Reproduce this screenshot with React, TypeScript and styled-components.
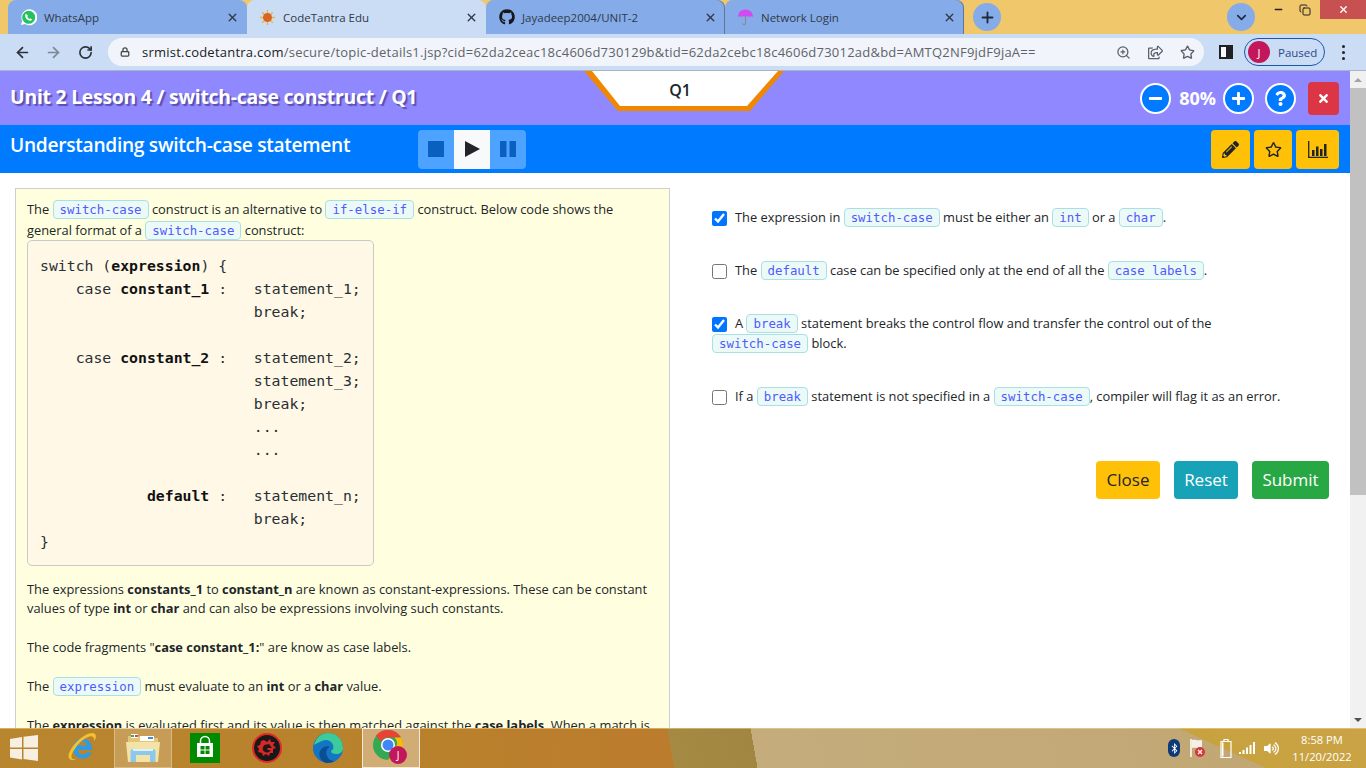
import styled, { createGlobalStyle } from 'styled-components';
import { ArrowLeft, ArrowRight, RotateCw, Lock, ZoomIn, Star, ChevronDown, Plus, X, Minus, Copy } from 'lucide-react';
import { FaGithub, FaRegShareSquare, FaPencilAlt, FaRegStar, FaTimes, FaPlus, FaMinus, FaQuestion, FaBluetoothB, FaVolumeUp } from 'react-icons/fa';

const GlobalStyle = createGlobalStyle`
  html, body { margin: 0; padding: 0; height: 100%; overflow: hidden; }
  body { font-family: "Open Sans", "Liberation Sans", sans-serif; color: #212529; }
  #root { height: 100%; }
  * { box-sizing: border-box; }
`;

const Screen = styled.div`
  display: flex;
  flex-direction: column;
  width: 1366px;
  height: 768px;
  overflow: hidden;
`;

/* browser chrome */
const TabStrip = styled.div`
  display: flex;
  align-items: flex-start;
  height: 34px;
  padding-left: 8px;
  background: #f0c76b;
`;

const Tab = styled.div<{ $active?: boolean; $sep?: boolean }>`
  display: flex;
  align-items: center;
  flex: none;
  width: 239px;
  height: 34px;
  padding: 0 8px 0 12px;
  border-radius: 8px 8px 0 0;
  background: ${p => (p.$active ? '#cbdcf5' : '#85ace8')};
  ${p => p.$sep && 'box-shadow: inset -1px 0 0 #5f7696;'}
  font-size: 11.5px;
  color: #2f3a4a;
  white-space: nowrap;
`;

const TabIcon = styled.span`
  display: flex;
  align-items: center;
  justify-content: center;
  width: 17px;
  height: 17px;
  margin-right: 7px;
  flex: none;
`;

const TabTitle = styled.span`
  flex: 1;
`;

const RoundButton = styled.div<{ $ml: number }>`
  display: flex;
  align-items: center;
  justify-content: center;
  flex: none;
  width: 28px;
  height: 28px;
  margin: 3px 0 0 ${p => p.$ml}px;
  border-radius: 50%;
  background: #85ace8;
  color: #1f2a3a;
`;

const WindowControls = styled.div`
  display: flex;
  align-items: flex-start;
  flex: none;
  margin-left: 12px;
`;

const WinButton = styled.div<{ $close?: boolean; $w: number }>`
  display: flex;
  align-items: center;
  justify-content: center;
  width: ${p => p.$w}px;
  height: 19px;
  background: ${p => (p.$close ? '#c75050' : 'transparent')};
  color: ${p => (p.$close ? '#fff' : '#222')};
`;

const Toolbar = styled.div`
  display: flex;
  align-items: center;
  height: 37px;
  padding-left: 6px;
  background: #cbdcf5;
  border-bottom: 1px solid #a9b3c9;
`;

const NavButton = styled.div<{ $w: number; $dim?: boolean }>`
  display: flex;
  align-items: center;
  justify-content: center;
  width: ${p => p.$w}px;
  color: ${p => (p.$dim ? '#7d8794' : '#2b2f36')};
`;

const AddressBar = styled.div`
  display: flex;
  align-items: center;
  flex: none;
  width: 1096px;
  height: 28px;
  margin-left: 6px;
  padding: 0 1px 0 12px;
  border-radius: 14px;
  background: #f1f5fb;
  font-size: 13px;
  letter-spacing: 0.23px;
  color: #5f6368;
`;

const Url = styled.span`
  flex: 1;
  margin-left: 12px;
  white-space: nowrap;
  b { font-weight: 400; color: #202124; }
`;

const AddressAction = styled.span`
  display: flex;
  justify-content: center;
  width: 32px;
  color: #5a6068;
`;

const SidePanelIcon = styled.div`
  flex: none;
  width: 14px;
  height: 14px;
  margin: 0 11px 0 15px;
  border: 2px solid #202124;
  border-right-width: 7px;
  background: #f7f9fc;
`;

const ProfilePill = styled.div`
  display: flex;
  align-items: center;
  flex: none;
  width: 81px;
  height: 28px;
  padding-left: 3px;
  border: 1px solid #1a56b0;
  border-radius: 14px;
  font-size: 11.5px;
  color: #2a4a8a;
`;

const Avatar = styled.span`
  display: flex;
  align-items: center;
  justify-content: center;
  width: 22px;
  height: 22px;
  margin-right: 8px;
  border-radius: 50%;
  background: #c2185b;
  color: #fff;
  font-size: 11px;
`;

const MenuDots = styled.div`
  display: flex;
  flex-direction: column;
  gap: 3px;
  margin-left: 17px;
  span { width: 3px; height: 3px; border-radius: 50%; background: #222; }
`;

/* page */
const Page = styled.div`
  display: flex;
  flex: 1;
  min-height: 0;
`;

const Scrollbar = styled.div`
  display: flex;
  flex-direction: column;
  width: 16px;
  background: #f1f1f1;
`;

const ScrollArrow = styled.div<{ $down?: boolean }>`
  height: 17px;
  flex: none;
  display: flex;
  align-items: center;
  justify-content: center;
  margin-top: ${p => (p.$down ? 'auto' : '0')};
  &::after {
    content: '';
    border-left: 4px solid transparent;
    border-right: 4px solid transparent;
    ${p => (p.$down ? 'border-top: 4px solid #505050;' : 'border-bottom: 4px solid #a3a3a3;')}
  }
`;

const ScrollThumb = styled.div`
  height: 407px;
  background: #c1c1c1;
`;

const Main = styled.div`
  display: flex;
  flex-direction: column;
  flex: 1;
  min-width: 0;
  background: #fff;
`;

const LessonBar = styled.div`
  position: relative;
  display: flex;
  align-items: center;
  height: 54px;
  padding: 0 11px 0 10px;
  background: #9088ff;
`;

const LessonTitle = styled.div`
  flex: 1;
  margin-top: -4px;
  font-size: 19.4px;
  font-weight: 700;
  letter-spacing: -0.25px;
  color: #fff;
  text-shadow: 2px 2px 1px #5a4fb0;
`;

const QuestionTab = styled.div`
  position: absolute;
  left: 584px;
  top: 0;
  width: 200px;
  height: 40px;
  background: #f08700;
  clip-path: polygon(0 0, 100% 0, 166px 100%, 34px 100%);
`;

const QuestionInner = styled.div`
  width: 186px;
  height: 35px;
  margin-left: 8px;
  padding-top: 8px;
  padding-right: 10px;
  background: #fff;
  clip-path: polygon(0 0, 100% 0, 155px 100%, 28px 100%);
  text-align: center;
  font-size: 16px;
  font-weight: 600;
  line-height: 22px;
`;

const ZoomCircle = styled.div<{ $ml: number }>`
  display: flex;
  align-items: center;
  justify-content: center;
  width: 31px;
  height: 31px;
  margin-left: ${p => p.$ml}px;
  border: 2px solid #fff;
  border-radius: 50%;
  background: #007bff;
  color: #fff;
  font-size: 15px;
`;

const ZoomValue = styled.span`
  margin-left: 8px;
  font-size: 18px;
  font-weight: 700;
  letter-spacing: 0;
  color: #fff;
`;

const CloseSquare = styled.div`
  display: flex;
  align-items: center;
  justify-content: center;
  width: 31px;
  height: 33px;
  margin-left: 12px;
  border-radius: 4px;
  background: #dc3545;
  color: #fff;
  font-size: 13px;
`;

const TopicBar = styled.div`
  display: flex;
  align-items: center;
  height: 48px;
  padding: 0 11px 0 10px;
  background: #007bff;
`;

const TopicTitle = styled.div`
  width: 408px;
  margin-top: -10px;
  font-size: 19.2px;
  font-weight: 600;
  letter-spacing: -0.3px;
  color: #fff;
`;

const PlayGroup = styled.div`
  display: flex;
  height: 39px;
  border-radius: 4px;
  overflow: hidden;
  background: #4da3ff;
`;

const PlayButton = styled.div<{ $active?: boolean }>`
  display: flex;
  align-items: center;
  justify-content: center;
  width: 36px;
  background: ${p => (p.$active ? '#f8f9fa' : 'transparent')};
  color: ${p => (p.$active ? '#212529' : '#0a60bf')};
`;

const ActionGroup = styled.div`
  display: flex;
  gap: 4px;
  margin-left: auto;
`;

const ActionButton = styled.div<{ $w: number }>`
  display: flex;
  align-items: center;
  justify-content: center;
  width: ${p => p.$w}px;
  height: 39px;
  border-radius: 4px;
  background: #ffc107;
  color: #212529;
  font-size: 17px;
`;

const Content = styled.div`
  display: flex;
  flex: 1;
  min-height: 0;
  overflow: hidden;
`;

const LessonPanel = styled.div`
  flex: none;
  width: 655px;
  height: 620px;
  margin: 15px 0 0 15px;
  padding: 10px 11px;
  border: 1px solid #cfcfcf;
  background: #ffffe0;
  font-size: 12.85px;
  line-height: 19.4px;
`;

const LessonText = styled.p`
  margin: 0 0 19.5px;
`;

const IntroText = styled.p`
  margin: 0 0 -1px;
  line-height: 21px;
`;

const Pill = styled.code`
  display: inline-block;
  padding: 0 6px;
  border: 1px solid #a9e0e8;
  border-radius: 4px;
  background: #ebfaf7;
  font-family: "DejaVu Sans Mono", monospace;
  font-size: 12.4px;
  line-height: 17px;
  color: #4f5bff;
`;

const CodeBlock = styled.pre`
  width: 347px;
  height: 326px;
  margin: 0 0 14px;
  padding: 13px 12px;
  border: 1px solid #c9c9c9;
  border-radius: 5px;
  background: #fff8e7;
  font-family: "DejaVu Sans Mono", monospace;
  font-size: 14.8px;
  line-height: 23px;
  color: #2a2f33;
  b { font-weight: 700; color: #111; }
`;

const Quiz = styled.div`
  flex: 1;
  margin-left: 42px;
  padding: 34px 21px 0 0;
  font-size: 12.85px;
  line-height: 20px;
`;

const QuizRow = styled.div`
  max-width: 590px;
  margin-bottom: 33px;
`;

const Check = styled.input`
  width: 15px;
  height: 15px;
  margin: 0 8px 0 0;
  vertical-align: -4px;
`;

const QuizActions = styled.div`
  display: flex;
  justify-content: flex-end;
  gap: 14px;
  margin-top: 55px;
`;

const QuizButton = styled.div<{ $bg: string; $fg: string; $w: number }>`
  display: flex;
  align-items: center;
  justify-content: center;
  width: ${p => p.$w}px;
  height: 38px;
  border-radius: 4px;
  background: ${p => p.$bg};
  color: ${p => p.$fg};
  font-size: 17px;
`;

/* windows taskbar */
const Taskbar = styled.div`
  display: flex;
  align-items: center;
  height: 40px;
  background:
    linear-gradient(24.4deg, transparent 523px, #c8a23f 523px, #caa347 601px),
    linear-gradient(80deg, #b8862f 0, #b9812b 400px, #bb7c2d 664px, #a58a44 664px, #a08640 746px, #c5ac7c 746px, #c0a672 1352px);
  box-shadow: inset 0 1px 0 rgba(255, 225, 160, 0.45);
`;

const TaskSlot = styled.div<{ $w: number; $ml: number; $open?: 'on' | 'active' }>`
  display: flex;
  align-items: center;
  justify-content: center;
  flex: none;
  width: ${p => p.$w}px;
  height: 40px;
  margin-left: ${p => p.$ml}px;
  ${p => p.$open === 'on' && 'background: rgba(255,255,255,.2); border: 1px solid rgba(255,255,255,.3);'}
  ${p => p.$open === 'active' && 'background: rgba(255,255,255,.35); border: 1px solid rgba(255,255,255,.75);'}
`;

const Tray = styled.div`
  display: flex;
  align-items: center;
  margin-left: auto;
  color: #fff;
`;

const TrayIcon = styled.span<{ $w: number }>`
  display: flex;
  justify-content: center;
  width: ${p => p.$w}px;
`;

const Clock = styled.div`
  width: 64px;
  margin: 0 12px 0 4px;
  text-align: center;
  font-size: 11.2px;
  line-height: 17px;
  color: #fff;
`;

const Bluetooth = styled.span`
  display: flex;
  align-items: center;
  justify-content: center;
  flex: none;
  width: 12px;
  height: 18px;
  border-radius: 6px;
  background: #0f3a78;
  color: #fff;
  font-size: 11px;
`;

const Whats = () => (
  <svg width="17" height="17" viewBox="0 0 17 17">
    <path d="M1 16l1.200-4.200A8 8 0 1 1 5 15z" fill="#fff" />
    <circle cx="8.700" cy="8.300" r="6.500" fill="#25c15f" />
    <path d="M6 4.800c-.7.600-1.100 1.500-.8 2.600.6 2 2.200 3.600 4.300 4.300 1.100.3 2-.2 2.600-1l-1.700-1.500-1 .7c-1-.4-1.700-1.100-2.100-2.100l.7-1z" fill="#fff" />
  </svg>
);

const Sun = () => (
  <svg width="17" height="17" viewBox="0 0 17 17">
    <g stroke="#e9b24b" strokeWidth="1.300">
      <path d="M8.500 1v15M1 8.500h15M3.200 3.200l10.600 10.600M13.800 3.200L3.200 13.800" />
    </g>
    <circle cx="8.500" cy="8.500" r="4.500" fill="#d9661f" />
  </svg>
);

const Umbrella = () => (
  <svg width="18" height="18" viewBox="0 0 18 18">
    <path d="M1 9c0-5 3.500-8 8-8s8 3 8 8c-1-1-2.500-1-3.500 0-1-1-3.500-1-4.500 0-1-1-3.500-1-4.500 0C3.500 8 2 8 1 9z" fill="#d14cf0" />
    <path d="M9 8v7.500a1.500 1.500 0 0 1-3 0" fill="none" stroke="#8a8a8a" strokeWidth="1.200" />
  </svg>
);

const StopGlyph = () => (
  <svg width="16" height="16" viewBox="0 0 16 16"><path d="M0 0h16v16H0z" fill="currentColor" /></svg>
);

const PlayGlyph = () => (
  <svg width="15" height="16" viewBox="0 0 15 16"><path d="M0 0l15 8-15 8z" fill="currentColor" /></svg>
);

const PauseGlyph = () => (
  <svg width="16" height="16" viewBox="0 0 16 16"><path d="M0 0h6.500v16H0zM9.500 0H16v16H9.500z" fill="currentColor" /></svg>
);

const WinLogo = () => (
  <svg width="28" height="26" viewBox="0 0 28 26">
    <path d="M0 4l12-2v10.500H0zM13.500 1.800L28 0v12.500H13.500zM0 14h12v10.500l-12-2zM13.500 14H28v12l-14.500-2z" fill="#f6efe2" />
  </svg>
);

const IeLogo = () => (
  <svg width="30" height="32" viewBox="0 0 30 32">
    <path d="M6 16a9.500 9.500 0 0 1 19 0v2H11c.4 3 2.300 4.500 4.700 4.500 1.800 0 3-.7 3.800-2h5.200c-1.300 3.700-4.700 6-9 6C10 26.500 6 22 6 16zm5.200-2.500h8.800c-.4-2.400-2.200-3.800-4.400-3.800s-4 1.400-4.400 3.800z" fill="#2e9be4" />
    <path d="M2.500 27c-3-3 1-11 8-18C17 3 25 -1 28 2c1.500 1.500 1 4-.5 7-.5-2-.5-3-1.500-4-2-2-8 1-13.500 6C7 17 3 24 5 26.500c1 1 3 .8 5.500-.3C7 28.500 4 28.500 2.500 27z" fill="#f2c12e" />
  </svg>
);

const Folder = () => (
  <svg width="34" height="32" viewBox="0 0 34 32">
    <path d="M2 4h11l2 2h17v22H2z" fill="#e3c67c" />
    <path d="M5 2h7v4H5z" fill="#fff" />
    <path d="M5 3h3v2H5z" fill="#3aa757" />
    <path d="M9 3h3v2H9z" fill="#d94a3d" />
    <path d="M14 4h14v5H14z" fill="#fff" />
    <path d="M22 5h5v2h-5z" fill="#3f8fd8" />
    <path d="M0 10h34l-2 20H2z" fill="#f4e3a6" />
    <path d="M7 17h20a2.500 2.500 0 0 1 2.500 2.500V30H24v-7H10v7H4.500V19.500A2.500 2.500 0 0 1 7 17z" fill="#8cc8ec" />
    <path d="M7 17h20v2H7z" fill="#dff2fc" />
  </svg>
);

const StoreLogo = () => (
  <svg width="30" height="30" viewBox="0 0 30 30">
    <path d="M0 0h30v30H0z" fill="#008a00" />
    <path d="M7 10h16v14H7z" fill="#fff" />
    <path d="M10.500 10V8a4.500 4.500 0 0 1 9 0v2" fill="none" stroke="#fff" strokeWidth="1.500" />
    <path d="M10.500 13h4v3.500h-4zM15.500 13h4v3.500h-4zM10.500 17.500h4V21h-4zM15.500 17.500h4V21h-4z" fill="#008a00" />
  </svg>
);

const GearLogo = () => (
  <svg width="30" height="30" viewBox="0 0 30 30">
    <circle cx="15" cy="15" r="14" fill="#191919" stroke="#e02a2a" strokeWidth="2" />
    <path d="M12 7l3 2 3-3 1 3h4l-2 3 3 3-3 1v4h-3l-1 3-3-2-3 2-1-3-4-1 1-3-2-3 3-1 1-4z" fill="#d92626" />
    <path d="M15 11.500a4 4 0 1 0 3.500 5.500h-3v-2H20l-3-4z" fill="#191919" />
  </svg>
);

const EdgeLogo = () => (
  <svg width="30" height="30" viewBox="0 0 30 30">
    <circle cx="15" cy="15" r="15" fill="#1276c4" />
    <path d="M1 12C3 4 9 0 15 0c8 0 15 6 15 15 0 4-3 6-7 6-3 0-5-1-5-3 2-1 3-3 2-6-2-5-7-6-11-4-3 1-6 3-8 4z" fill="#3ccb9a" />
    <path d="M14 30c-6-1-9-7-7-12 2-4 7-6 10-4-3 1-5 5-3 9 1 3 4 5 8 5-2 1-5 2-8 2z" fill="#0c4d93" />
  </svg>
);

const ChromeLogo = () => (
  <svg width="36" height="36" viewBox="0 0 36 36">
    <circle cx="15" cy="15" r="15" fill="#34a853" />
    <path d="M15 0a15 15 0 0 1 13 7.500H15a7.500 7.500 0 0 0-7 4.500L3 5.500A15 15 0 0 1 15 0z" fill="#ea4335" />
    <path d="M28 7.500A15 15 0 0 1 15 30l6.500-11a7.500 7.500 0 0 0 0-11.500z" fill="#fbbc05" />
    <circle cx="15" cy="15" r="7" fill="#fff" />
    <circle cx="15" cy="15" r="5.500" fill="#4285f4" />
    <circle cx="25" cy="25" r="9" fill="#c2185b" />
    <text x="25" y="28.500" fontSize="10" fill="#fff" textAnchor="middle" fontFamily="Open Sans, sans-serif">J</text>
  </svg>
);

const FlagIcon = () => (
  <svg width="18" height="20" viewBox="0 0 18 20">
    <path d="M3 1v18" stroke="#fff" strokeWidth="1.500" />
    <path d="M4 2c3-1 5 1 10 0v8c-4 1-6-1-10 0z" fill="#f5f0e8" />
    <circle cx="12" cy="14" r="5" fill="#d93636" />
    <path d="M10 12l4 4M14 12l-4 4" stroke="#fff" strokeWidth="1.300" />
  </svg>
);

const BatteryIcon = () => (
  <svg width="12" height="19" viewBox="0 0 12 19">
    <path d="M4 .5h4v2H4zM1 2.500h10v16H1z" fill="none" stroke="#fff" strokeWidth="1.200" />
    <path d="M2 3.500h1.500v14H2z" fill="#fff" />
  </svg>
);

const SignalIcon = () => (
  <svg width="16" height="12" viewBox="0 0 16 12">
    <path d="M0 10h2v2H0zM3.500 8h2v4h-2zM7 5.500h2V12H7zM10.500 3h2v9h-2zM14 0h2v12h-2z" fill="#fff" />
  </svg>
);

const ChartIcon = () => (
  <svg width="20" height="17" viewBox="0 0 20 17">
    <path d="M.7 0v16.300H20" fill="none" stroke="#212529" strokeWidth="1.300" />
    <path d="M4 9h2.500v6H4zM8 5.500h2.500V15H8zM12 8h2.500v7H12zM16 3h2.500v12H16z" fill="#212529" />
  </svg>
);

export default function App() {
  return (
    <Screen>
      <GlobalStyle />
      <TabStrip>
        <Tab>
          <TabIcon><Whats /></TabIcon>
          <TabTitle>WhatsApp</TabTitle>
          <X size={13} strokeWidth={2.6} />
        </Tab>
        <Tab $active>
          <TabIcon><Sun /></TabIcon>
          <TabTitle>CodeTantra Edu</TabTitle>
          <X size={13} strokeWidth={2.6} />
        </Tab>
        <Tab $sep>
          <TabIcon><FaGithub size={16} color="#16181c" /></TabIcon>
          <TabTitle>Jayadeep2004/UNIT-2</TabTitle>
          <X size={13} strokeWidth={2.6} />
        </Tab>
        <Tab $sep>
          <TabIcon><Umbrella /></TabIcon>
          <TabTitle>Network Login</TabTitle>
          <X size={13} strokeWidth={2.6} />
        </Tab>
        <RoundButton $ml={9}><Plus size={17} strokeWidth={2.6} /></RoundButton>
        <RoundButton $ml={226}><ChevronDown size={15} strokeWidth={2.6} /></RoundButton>
        <WindowControls>
          <WinButton $w={22}><Minus size={11} strokeWidth={3} /></WinButton>
          <WinButton $w={31}><Copy size={12} strokeWidth={2} /></WinButton>
          <WinButton $w={46} $close><X size={11} strokeWidth={3} /></WinButton>
        </WindowControls>
      </TabStrip>
      <Toolbar>
        <NavButton $w={32}><ArrowLeft size={17} strokeWidth={2.4} /></NavButton>
        <NavButton $w={31} $dim><ArrowRight size={17} strokeWidth={2.4} /></NavButton>
        <NavButton $w={33}><RotateCw size={15} strokeWidth={2.6} /></NavButton>
        <AddressBar>
          <Lock size={10} strokeWidth={3} color="#444" />
          <Url><b>srmist.codetantra.com</b>/secure/topic-details1.jsp?cid=62da2ceac18c4606d730129b&amp;tid=62da2cebc18c4606d73012ad&amp;bd=AMTQ2NF9jdF9jaA==</Url>
          <AddressAction><ZoomIn size={15} /></AddressAction>
          <AddressAction><FaRegShareSquare size={15} /></AddressAction>
          <AddressAction><Star size={15} strokeWidth={2.2} /></AddressAction>
        </AddressBar>
        <SidePanelIcon />
        <ProfilePill>
          <Avatar>J</Avatar>
          Paused
        </ProfilePill>
        <MenuDots><span /><span /><span /></MenuDots>
      </Toolbar>
      <Page>
        <Main>
          <LessonBar>
            <LessonTitle>Unit 2 Lesson 4 / switch-case construct / Q1</LessonTitle>
            <QuestionTab>
              <QuestionInner>Q1</QuestionInner>
            </QuestionTab>
            <ZoomCircle $ml={0}><FaMinus /></ZoomCircle>
            <ZoomValue>80%</ZoomValue>
            <ZoomCircle $ml={7}><FaPlus /></ZoomCircle>
            <ZoomCircle $ml={11}><FaQuestion /></ZoomCircle>
            <CloseSquare><FaTimes /></CloseSquare>
          </LessonBar>
          <TopicBar>
            <TopicTitle>Understanding switch-case statement</TopicTitle>
            <PlayGroup>
              <PlayButton><StopGlyph /></PlayButton>
              <PlayButton $active><PlayGlyph /></PlayButton>
              <PlayButton><PauseGlyph /></PlayButton>
            </PlayGroup>
            <ActionGroup>
              <ActionButton $w={39}><FaPencilAlt /></ActionButton>
              <ActionButton $w={38}><FaRegStar /></ActionButton>
              <ActionButton $w={43}><ChartIcon /></ActionButton>
            </ActionGroup>
          </TopicBar>
          <Content>
            <LessonPanel>
              <IntroText>
                The <Pill>switch-case</Pill> construct is an alternative to <Pill>if-else-if</Pill> construct. Below code shows the general format of a <Pill>switch-case</Pill> construct:
              </IntroText>
              <CodeBlock>{`switch (`}<b>expression</b>{`) {
    case `}<b>constant_1</b>{` :   statement_1;
                        break;

    case `}<b>constant_2</b>{` :   statement_2;
                        statement_3;
                        break;
                        ...
                        ...

            `}<b>default</b>{` :   statement_n;
                        break;
}`}</CodeBlock>
              <LessonText>
                The expressions <b>constants_1</b> to <b>constant_n</b> are known as constant-expressions. These can be constant values of type <b>int</b> or <b>char</b> and can also be expressions involving such constants.
              </LessonText>
              <LessonText>
                The code fragments "<b>case constant_1:</b>" are know as case labels.
              </LessonText>
              <LessonText>
                The <Pill>expression</Pill> must evaluate to an <b>int</b> or a <b>char</b> value.
              </LessonText>
              <LessonText>
                The <b>expression</b> is evaluated first and its value is then matched against the <b>case labels</b>. When a match is
              </LessonText>
            </LessonPanel>
            <Quiz>
              <QuizRow>
                <Check type="checkbox" defaultChecked />The expression in <Pill>switch-case</Pill> must be either an <Pill>int</Pill> or a <Pill>char</Pill>.
              </QuizRow>
              <QuizRow>
                <Check type="checkbox" />The <Pill>default</Pill> case can be specified only at the end of all the <Pill>case labels</Pill>.
              </QuizRow>
              <QuizRow>
                <Check type="checkbox" defaultChecked />A <Pill>break</Pill> statement breaks the control flow and transfer the control out of the <Pill>switch-case</Pill> block.
              </QuizRow>
              <QuizRow>
                <Check type="checkbox" />If a <Pill>break</Pill> statement is not specified in a <Pill>switch-case</Pill>, compiler will flag it as an error.
              </QuizRow>
              <QuizActions>
                <QuizButton $bg="#ffc107" $fg="#212529" $w={64}>Close</QuizButton>
                <QuizButton $bg="#17a2b8" $fg="#fff" $w={64}>Reset</QuizButton>
                <QuizButton $bg="#28a745" $fg="#fff" $w={77}>Submit</QuizButton>
              </QuizActions>
            </Quiz>
          </Content>
        </Main>
        <Scrollbar>
          <ScrollArrow />
          <ScrollThumb />
          <ScrollArrow $down />
        </Scrollbar>
      </Page>
      <Taskbar>
        <TaskSlot $w={28} $ml={10}><WinLogo /></TaskSlot>
        <TaskSlot $w={30} $ml={29}><IeLogo /></TaskSlot>
        <TaskSlot $w={58} $ml={17} $open="on"><Folder /></TaskSlot>
        <TaskSlot $w={30} $ml={18}><StoreLogo /></TaskSlot>
        <TaskSlot $w={30} $ml={32}><GearLogo /></TaskSlot>
        <TaskSlot $w={30} $ml={31}><EdgeLogo /></TaskSlot>
        <TaskSlot $w={58} $ml={19} $open="active"><ChromeLogo /></TaskSlot>
        <Tray>
          <TrayIcon $w={12}><Bluetooth><FaBluetoothB /></Bluetooth></TrayIcon>
          <TrayIcon $w={34}><FlagIcon /></TrayIcon>
          <TrayIcon $w={24}><BatteryIcon /></TrayIcon>
          <TrayIcon $w={18}><SignalIcon /></TrayIcon>
          <TrayIcon $w={30}><FaVolumeUp size={15} /></TrayIcon>
          <Clock>8:58 PM<br />11/20/2022</Clock>
        </Tray>
      </Taskbar>
    </Screen>
  );
}
